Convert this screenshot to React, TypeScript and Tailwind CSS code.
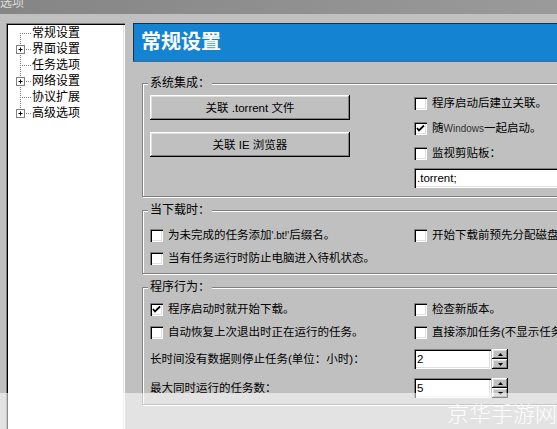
import React from "react";

const sunken =
  "shadow-[inset_1px_1px_0_#808080,inset_2px_2px_0_#000,inset_-1px_-1px_0_#fff,inset_-2px_-2px_0_#dfdfdf]";
const raised =
  "shadow-[inset_-1px_-1px_0_#000,inset_1px_1px_0_#fff,inset_-2px_-2px_0_#808080,inset_2px_2px_0_#dfdfdf]";

function Box({ checked }: { checked?: boolean }) {
  return (
    <span className={"inline-flex w-[13px] h-[13px] shrink-0 bg-white items-center justify-center " + sunken}>
      {checked && (
        <svg width="13" height="13" viewBox="0 0 13 13">
          <path d="M3 6 L5 8.5 L10 3.5" stroke="#000" strokeWidth="1.8" fill="none" />
        </svg>
      )}
    </span>
  );
}

function Check({ checked, children }: { checked?: boolean; children: React.ReactNode }) {
  return (
    <div className="flex items-center gap-[5px] h-4 whitespace-nowrap">
      <Box checked={checked} />
      <span>{children}</span>
    </div>
  );
}

function Group({ label, className, children }: { label: string; className: string; children: React.ReactNode }) {
  return (
    <div className={"relative border border-[#808080] shadow-[inset_1px_1px_0_#fff,1px_1px_0_#fff] pl-[7px] " + className}>
      <span className="absolute top-[-8px] left-[5px] bg-[#c0c0c0] px-[2px] leading-[14px] text-[12px]">{label}</span>
      {children}
    </div>
  );
}

function Spin({ value }: { value: string }) {
  return (
    <div className="flex gap-[1px] shrink-0">
      <div className={"w-[77px] h-[20px] bg-white pl-[3px] pt-[2px] leading-[16px] " + sunken}>{value}</div>
      <div className="flex flex-col w-[16px]">
        <div className={"h-[10px] bg-[#c0c0c0] flex items-center justify-center " + raised}>
          <svg width="5" height="3" viewBox="0 0 5 3">
            <path d="M0 3 L2.5 0 L5 3 Z" fill="#000" />
          </svg>
        </div>
        <div className={"h-[10px] bg-[#c0c0c0] flex items-center justify-center " + raised}>
          <svg width="5" height="3" viewBox="0 0 5 3">
            <path d="M0 0 L2.5 3 L5 0 Z" fill="#000" />
          </svg>
        </div>
      </div>
    </div>
  );
}

const treeItems = [
  { label: "常规设置", plus: false },
  { label: "界面设置", plus: true },
  { label: "任务选项", plus: false },
  { label: "网络设置", plus: true },
  { label: "协议扩展", plus: false },
  { label: "高级选项", plus: true },
];

function TreeLine({ idx, last, plus }: { idx: number; last: boolean; plus: boolean }) {
  return (
    <svg width="24" height="16" viewBox="0 0 24 16" className="shrink-0">
      <line
        x1="12.5"
        y1={idx === 0 ? 8 : 0}
        x2="12.5"
        y2={last ? 8 : 16}
        stroke="#808080"
        strokeDasharray="1 1"
      />
      <line x1="12" y1="8.5" x2="23" y2="8.5" stroke="#808080" strokeDasharray="1 1" />
      {plus && (
        <g>
          <rect x="8.5" y="4.5" width="8" height="8" fill="#fff" stroke="#808080" />
          <line x1="10.5" y1="8.5" x2="14.5" y2="8.5" stroke="#000" />
          <line x1="12.5" y1="6.5" x2="12.5" y2="10.5" stroke="#000" />
        </g>
      )}
    </svg>
  );
}

export default function App() {
  return (
    <div className="relative w-[557px] h-[429px] overflow-hidden bg-[#c0c0c0] text-black text-[11.5px] leading-4 font-['Liberation_Sans','Noto_Sans_CJK_SC',sans-serif]">
      <div className="h-[14px] bg-gradient-to-r from-[#858585] to-[#9a9a9a] text-[#dcdcdc] text-[12px] leading-[12px] overflow-hidden">
        <div className="mt-[-3px]">选项</div>
      </div>
      <div className="flex mt-[9px]">
        <div className={"ml-[6px] w-[119px] h-[420px] shrink-0 bg-white pt-[2px] pl-[2px] " + sunken}>
          {treeItems.map((it, i) => (
            <div key={it.label} className="flex items-center h-4 text-[12px]">
              <TreeLine idx={i} last={i === treeItems.length - 1} plus={it.plus} />
              <span className="whitespace-nowrap">{it.label}</span>
            </div>
          ))}
        </div>
        <div className="ml-[8px] w-[470px] shrink-0">
          <div className="h-[39px] bg-[#1483d2] border-t border-l border-[#1b2f44] border-b-2 border-b-[#2c74aa] flex items-center pl-[7px] text-white font-bold text-[20px] leading-none">
            常规设置
          </div>
          <div className="pl-[9px]">
            <Group label="系统集成：" className="mt-[21px] pt-[11px] pb-[8px]">
              <div className="flex">
                <div className="w-[264px] shrink-0 flex flex-col gap-[12px]">
                  <button className={"w-[200px] h-[25px] bg-[#c0c0c0] " + raised}>关联 .torrent 文件</button>
                  <button className={"w-[200px] h-[25px] bg-[#c0c0c0] " + raised}>关联 IE 浏览器</button>
                </div>
                <div className="flex flex-col gap-[9px]">
                  <Check>程序启动后建立关联。</Check>
                  <Check checked>
                    随<span className="text-[10px] text-[#333]">Windows</span>一起启动。
                  </Check>
                  <Check>监视剪贴板：</Check>
                  <div className={"mt-[-2px] w-[200px] h-[20px] bg-white pl-[3px] pt-[2px] leading-[16px] " + sunken}>
                    .torrent;
                  </div>
                </div>
              </div>
            </Group>
            <Group label="当下载时：" className="mt-[13px] pt-[16px] pb-[7px]">
              <div className="flex flex-col gap-[7px]">
                <div className="flex">
                  <div className="w-[264px] shrink-0">
                    <Check>
                      为未完成的任务添加<span className="text-[10px]">'.bt!'</span>后缀名。
                    </Check>
                  </div>
                  <Check>开始下载前预先分配磁盘空间</Check>
                </div>
                <Check>当有任务运行时防止电脑进入待机状态。</Check>
              </div>
            </Group>
            <Group label="程序行为：" className="mt-[13px] pt-[13px] pb-[6px]">
              <div className="flex flex-col">
                <div className="flex">
                  <div className="w-[264px] shrink-0">
                    <Check checked>程序启动时就开始下载。</Check>
                  </div>
                  <Check>检查新版本。</Check>
                </div>
                <div className="flex mt-[7px]">
                  <div className="w-[264px] shrink-0">
                    <Check>自动恢复上次退出时正在运行的任务。</Check>
                  </div>
                  <Check>直接添加任务(不显示任务对话框)</Check>
                </div>
                <div className="flex items-center mt-[9px]">
                  <div className="w-[264px] shrink-0 whitespace-nowrap">长时间没有数据则停止任务(单位：小时)：</div>
                  <Spin value="2" />
                </div>
                <div className="flex items-center mt-[9px]">
                  <div className="w-[264px] shrink-0 whitespace-nowrap">最大同时运行的任务数：</div>
                  <Spin value="5" />
                </div>
              </div>
            </Group>
          </div>
        </div>
      </div>
      <div className="absolute left-0 right-0 top-[393px] bottom-0 bg-white/55" />
      <div className="absolute left-[447px] top-[399px] text-[22px] leading-[26px] text-white/90 whitespace-nowrap font-['Noto_Sans_CJK_SC',sans-serif] font-light">
        京华手游网
      </div>
    </div>
  );
}
